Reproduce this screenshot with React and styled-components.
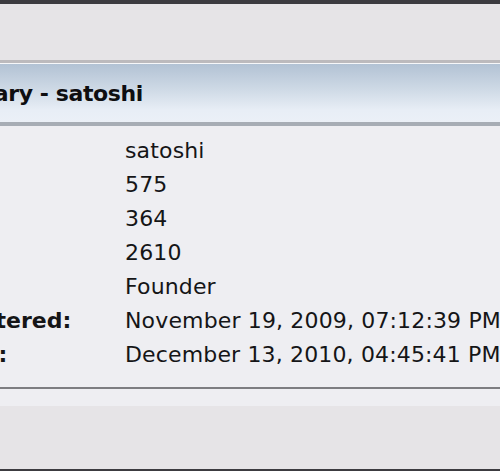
import { Fragment } from "react";
import styled, { createGlobalStyle } from "styled-components";

const GlobalStyle = createGlobalStyle`
  html, body {
    margin: 0;
    padding: 0;
    background: #e6e4e7;
    overflow: hidden;
  }
  body {
    font-family: "DejaVu Sans", Verdana, sans-serif;
  }
`;

const Screen = styled.div`
  width: 500px;
  height: 471px;
  overflow: hidden;
  display: flex;
  flex-direction: column;
  background: #e6e4e7;
`;

const TopBar = styled.div`
  height: 4px;
  background: #3c3b40;
  flex-shrink: 0;
`;

const Gap = styled.div`
  height: 56px;
  flex-shrink: 0;
`;

const Panel = styled.div`
  margin-left: -160px;
  width: 820px;
  border-top: 3px solid #bcbabd;
  flex-shrink: 0;
`;

const Header = styled.div`
  height: 58px;
  border-top: 1px solid #f6f7f9;
  border-bottom: 4px solid #a7adb5;
  background: linear-gradient(to bottom, #b2c2d4 0%, #cfdae6 45%, #e8eef6 80%, #ebf0f7 100%);
  display: flex;
  align-items: center;
  padding-left: 78px;
  font-size: 22px;
  font-weight: bold;
  letter-spacing: -0.4px;
  color: #0e0e10;
`;

const Body = styled.div`
  background: #eeeef2;
  padding: 8px 0 15px 21px;
  border-bottom: 2px solid #7d7d81;
  display: grid;
  grid-template-columns: 264px 1fr;
  font-size: 22px;
  line-height: 34px;
  color: #151517;
`;

const Label = styled.div`
  font-weight: bold;
  white-space: nowrap;
`;

const Value = styled.div`
  white-space: nowrap;
  letter-spacing: 0.15px;
`;

const Footer = styled.div`
  height: 17px;
  background: #eeeef2;
`;

const Fill = styled.div`
  flex: 1;
`;

const BottomBar = styled.div`
  height: 2px;
  background: #3c3b40;
  flex-shrink: 0;
`;

const rows = [
  ["Name:", "satoshi"],
  ["Posts:", "575"],
  ["Activity:", "364"],
  ["Merit:", "2610"],
  ["Position:", "Founder"],
  ["Date Registered:", "November 19, 2009, 07:12:39 PM"],
  ["Last Active:", "December 13, 2010, 04:45:41 PM"],
];

const App = () => {
  return (
    <Screen>
      <GlobalStyle />
      <TopBar />
      <Gap />
      <Panel>
        <Header>Summary - satoshi</Header>
        <Body>
          {rows.map(([label, value]) => (
            <Fragment key={label}>
              <Label>{label}</Label>
              <Value>{value}</Value>
            </Fragment>
          ))}
        </Body>
        <Footer />
      </Panel>
      <Fill />
      <BottomBar />
    </Screen>
  );
};

export default App;
